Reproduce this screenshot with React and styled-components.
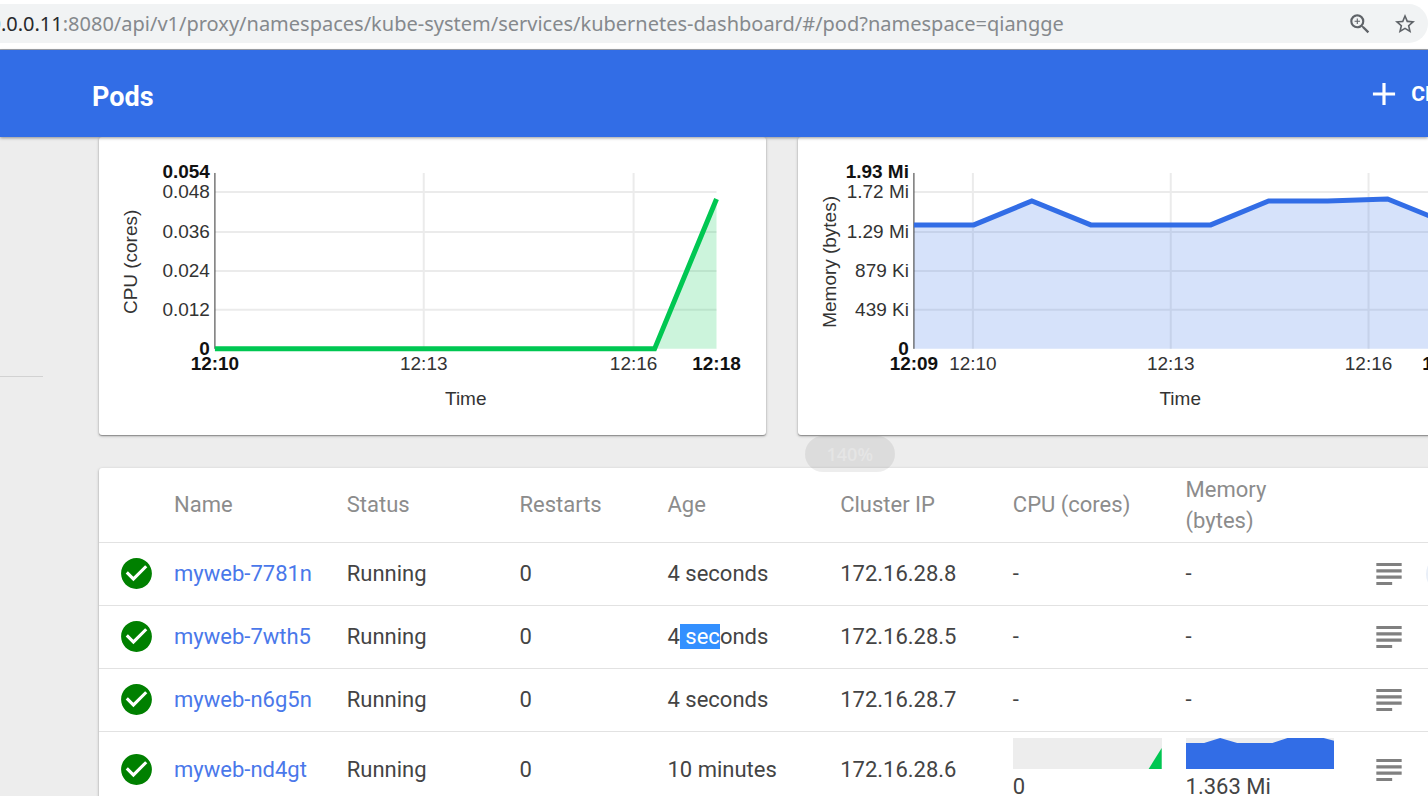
import React from 'react';
import styled, { createGlobalStyle } from 'styled-components';
import {
	MdAdd,
	MdCheckCircle,
	MdMoreVert,
	MdStarBorder,
	MdSubject,
	MdZoomIn,
} from 'react-icons/md';

const cpuChart = {
	title: 'CPU (cores)',
	color: '#00c752',
	start: 116,
	end: 618,
	yTicks: [
		{ y: 55, label: '0.048' },
		{ y: 95, label: '0.036' },
		{ y: 134, label: '0.024' },
		{ y: 173, label: '0.012' },
	],
	yMax: '0.054',
	xTicks: [
		{ x: 325, label: '12:13' },
		{ x: 535, label: '12:16' },
	],
	xMin: '12:10',
	xMax: '12:18',
	points: '116,212 556,212 618,62',
};

const memoryChart = {
	title: 'Memory (bytes)',
	color: '#326de6',
	start: 116,
	end: 649,
	yTicks: [
		{ y: 55, label: '1.72 Mi' },
		{ y: 95, label: '1.29 Mi' },
		{ y: 134, label: '879 Ki' },
		{ y: 173, label: '439 Ki' },
	],
	yMax: '1.93 Mi',
	xTicks: [
		{ x: 175, label: '12:10' },
		{ x: 373, label: '12:13' },
		{ x: 571, label: '12:16' },
	],
	xMin: '12:09',
	xMax: '12:18',
	points:
		'116,88 176,88 234,64 293,88 413,88 471,64 530,64 590,62 649,86',
};

const pods = [
	{ name: 'myweb-7781n', age: '4 seconds', ip: '172.16.28.8', menuActive: true },
	{ name: 'myweb-7wth5', age: '4 seconds', ip: '172.16.28.5', selected: [1, 5] },
	{ name: 'myweb-n6g5n', age: '4 seconds', ip: '172.16.28.7' },
	{
		name: 'myweb-nd4gt',
		age: '10 minutes',
		ip: '172.16.28.6',
		cpu: { value: '0', color: '#00c752', points: '135,31 148,10 148,31' },
		memory: {
			value: '1.363 Mi',
			color: '#326de6',
			points:
				'0,31 0,5 18,5 34,0 51,5 86,5 101,0 137,0 148,3 148,31',
		},
	},
];

const Chart = ({ data }) => (
	<ChartSvg viewBox='0 0 667 298' role='img' aria-label={data.title}>
		{data.yTicks.map(({ y }) => (
			<line key={y} className='grid' x1={data.start} x2={data.end} y1={y} y2={y} />
		))}
		{data.xTicks.map(({ x }) => (
			<line key={x} className='grid' x1={x} x2={x} y1='36' y2='212' />
		))}
		<polygon
			points={`${data.start},212 ${data.points} ${data.end},212`}
			fill={data.color}
			fillOpacity='0.2'
		/>
		<line className='axis' x1='116' x2='116' y1='36' y2='212' />
		<polyline
			points={data.points}
			fill='none'
			stroke={data.color}
			strokeWidth='5'
		/>

		<text className='bold' x='111' y='41' textAnchor='end'>
			{data.yMax}
		</text>
		{data.yTicks.map(({ y, label }) => (
			<text key={label} x='111' y={y + 6} textAnchor='end'>
				{label}
			</text>
		))}
		<text className='bold' x='111' y='218' textAnchor='end'>
			0
		</text>

		<text className='bold' x={data.start} y='233' textAnchor='middle'>
			{data.xMin}
		</text>
		{data.xTicks.map(({ x, label }) => (
			<text key={label} x={x} y='233' textAnchor='middle'>
				{label}
			</text>
		))}
		<text className='bold' x={data.end} y='233' textAnchor='middle'>
			{data.xMax}
		</text>

		<text x={(data.start + data.end) / 2} y='268' textAnchor='middle'>
			Time
		</text>
		<text transform='translate(38 125) rotate(-90)' textAnchor='middle'>
			{data.title}
		</text>
	</ChartSvg>
);

const Metric = ({ data }) => {
	if (!data) return '-';
	return (
		<>
			<Spark viewBox='0 0 148 31' preserveAspectRatio='none'>
				<polygon points={data.points} fill={data.color} />
			</Spark>
			<div>{data.value}</div>
		</>
	);
};

const Age = ({ text, selected }) => {
	if (!selected) return text;
	const [from, to] = selected;
	return (
		<>
			{text.slice(0, from)}
			<Selection>{text.slice(from, to)}</Selection>
			{text.slice(to)}
		</>
	);
};

const App = () => {
	return (
		<Page>
			<GlobalStyle />
			<BrowserBar>
				<AddressBar>
					<Url role='textbox' aria-label='Address'>
						<b>10.0.0.11</b>
						:8080/api/v1/proxy/namespaces/kube-system/services/kubernetes-dashboard/#/pod?namespace=qiangge
					</Url>
					<BarButton type='button' aria-label='Zoom'>
						<MdZoomIn size={26} />
					</BarButton>
					<BarButton type='button' aria-label='Bookmark this page'>
						<MdStarBorder size={24} />
					</BarButton>
				</AddressBar>
			</BrowserBar>

			<Header>
				<h1>Pods</h1>
				<CreateButton type='button'>
					<MdAdd size={38} />
					<span>CREATE</span>
				</CreateButton>
			</Header>

			<Body>
				<Sidebar>
					<hr />
				</Sidebar>
				<Content>
					<Charts>
						<Card>
							<Chart data={cpuChart} />
						</Card>
						<Card>
							<Chart data={memoryChart} />
						</Card>
						<ZoomBadge>140%</ZoomBadge>
					</Charts>

					<Card>
						<Table>
							<colgroup>
								<Col $width='5.5%' />
								<Col $width='12.65%' />
								<Col $width='12.65%' />
								<Col $width='10.85%' />
								<Col $width='12.65%' />
								<Col $width='12.65%' />
								<Col $width='12.65%' />
								<Col $width='12.65%' />
								<Col />
							</colgroup>
							<thead>
								<tr>
									<th />
									<th>Name</th>
									<th>Status</th>
									<th>Restarts</th>
									<th>Age</th>
									<th>Cluster IP</th>
									<th>CPU (cores)</th>
									<th>Memory (bytes)</th>
									<th />
								</tr>
							</thead>
							<tbody>
								{pods.map((pod) => (
									<tr key={pod.name}>
										<IconCell>
											<MdCheckCircle size={37} color='#008000' />
										</IconCell>
										<td>
											<a href={`#/pod/qiangge/${pod.name}`}>{pod.name}</a>
										</td>
										<td>Running</td>
										<td>0</td>
										<td>
											<Age text={pod.age} selected={pod.selected} />
										</td>
										<td>{pod.ip}</td>
										<td>
											<Metric data={pod.cpu} />
										</td>
										<td>
											<Metric data={pod.memory} />
										</td>
										<td>
											<Actions>
												<RowButton type='button' aria-label='Logs'>
													<MdSubject size={38} />
												</RowButton>
												<RowButton
													type='button'
													aria-label='More'
													$active={pod.menuActive}
												>
													<MdMoreVert size={38} />
												</RowButton>
											</Actions>
										</td>
									</tr>
								))}
							</tbody>
						</Table>
					</Card>
				</Content>
			</Body>
		</Page>
	);
};

const GlobalStyle = createGlobalStyle`
	* {
		box-sizing: border-box;
	}
	body {
		margin: 0;
		background: #ededed;
		font-family: Roboto, sans-serif;
	}
	button {
		border: 0;
		padding: 0;
		background: none;
		font: inherit;
		cursor: pointer;
	}
	svg {
		display: block;
		flex-shrink: 0;
	}
`;

const Page = styled.div`
	display: flex;
	flex-direction: column;
	height: 100vh;
	overflow: hidden;
`;

const BrowserBar = styled.div`
	padding: 4px 0 6px;
	background: #fff;
	border-bottom: 1px solid #a3a7ad;
`;

const AddressBar = styled.div`
	display: flex;
	align-items: center;
	gap: 20px;
	height: 39px;
	margin-left: -22px;
	padding-right: 11px;
	border-radius: 20px;
	background: #f1f3f4;
`;

const Url = styled.div`
	flex: 1;
	white-space: nowrap;
	font-family: 'Noto Sans', 'Open Sans', sans-serif;
	font-size: 20px;
	line-height: 38px;
	color: #85898d;

	b {
		font-weight: 400;
		color: #27292c;
	}
`;

const BarButton = styled.button`
	color: #5f6368;
`;

const Header = styled.header`
	position: relative;
	z-index: 1;
	display: flex;
	align-items: center;
	justify-content: space-between;
	height: 87px;
	flex-shrink: 0;
	padding-left: 92px;
	background: #326de6;
	color: #fff;
	box-shadow: 0 1px 3px rgba(0, 0, 0, 0.4);

	h1 {
		margin: 6px 0 0;
		font-size: 27px;
		font-weight: 700;
	}
`;

const CreateButton = styled.button`
	display: flex;
	align-items: center;
	gap: 8px;
	margin-right: -60px;
	color: #fff;
	font-size: 21px;
	font-weight: 700;
`;

const Body = styled.div`
	display: flex;
`;

const Sidebar = styled.aside`
	width: 43px;
	flex-shrink: 0;
	padding-top: 239px;

	hr {
		margin: 0;
		border: 0;
		border-top: 1px solid #d2d2d2;
	}
`;

/* runs past the right edge of the window */
const Content = styled.main`
	flex: 1;
	display: flex;
	flex-direction: column;
	gap: 33px;
	margin: 0 -36px 0 56px;
`;

const Charts = styled.section`
	position: relative;
	display: grid;
	grid-template-columns: 1fr 1fr;
	gap: 32px;
`;

const Card = styled.div`
	background: #fff;
	border-radius: 3px;
	box-shadow: 0 1px 3px rgba(0, 0, 0, 0.3), 0 1px 1px rgba(0, 0, 0, 0.25);
`;

const ChartSvg = styled.svg`
	width: 100%;
	overflow: visible;

	.grid {
		stroke: #ebebeb;
		stroke-width: 2;
	}
	.axis {
		stroke: #333;
		stroke-width: 1;
	}
	text {
		font-family: 'Liberation Sans', Arial, sans-serif;
		font-size: 19px;
		fill: #333;
	}
	.bold {
		font-weight: 700;
		fill: #111;
	}
`;

const ZoomBadge = styled.div`
	position: absolute;
	top: 100%;
	left: 55%;
	transform: translateX(-50%);
	margin-top: 1px;
	width: 90px;
	border-radius: 18px;
	background: rgba(0, 0, 0, 0.07);
	color: #e5e5e5;
	font-family: 'Open Sans', sans-serif;
	font-size: 18px;
	font-weight: 600;
	line-height: 36px;
	text-align: center;
`;

const Table = styled.table`
	width: 100%;
	table-layout: fixed;
	border-collapse: collapse;
	font-size: 22px;
	line-height: 31px;
	color: #444;

	th,
	td {
		padding: 6px 24px 6px 0;
		text-align: left;
		vertical-align: middle;
	}
	th {
		font-weight: 400;
		color: #8c8c8c;
	}
	td {
		height: 63px;
		border-top: 1px solid #e2e2e2;
	}
	th:last-child,
	td:last-child {
		padding-right: 0;
	}
	a {
		color: #4a78ea;
		text-decoration: none;
	}
`;

const Col = styled.col`
	width: ${({ $width }) => $width || 'auto'};
`;

const IconCell = styled.td`
	&& {
		padding-left: 19px;
		padding-right: 0;
	}
`;

const Selection = styled.span`
	background: #3390ff;
	color: #fff;
`;

const Spark = styled.svg`
	width: 100%;
	height: 31px;
	margin-bottom: 2px;
	background: #ededed;
`;

const Actions = styled.div`
	display: flex;
	align-items: center;
	gap: 18px;
	padding-left: 12px;
`;

const RowButton = styled.button`
	border-radius: 50%;
	color: #808080;
	background: ${({ $active }) => ($active ? '#e9eff8' : 'none')};
`;

export default App;
